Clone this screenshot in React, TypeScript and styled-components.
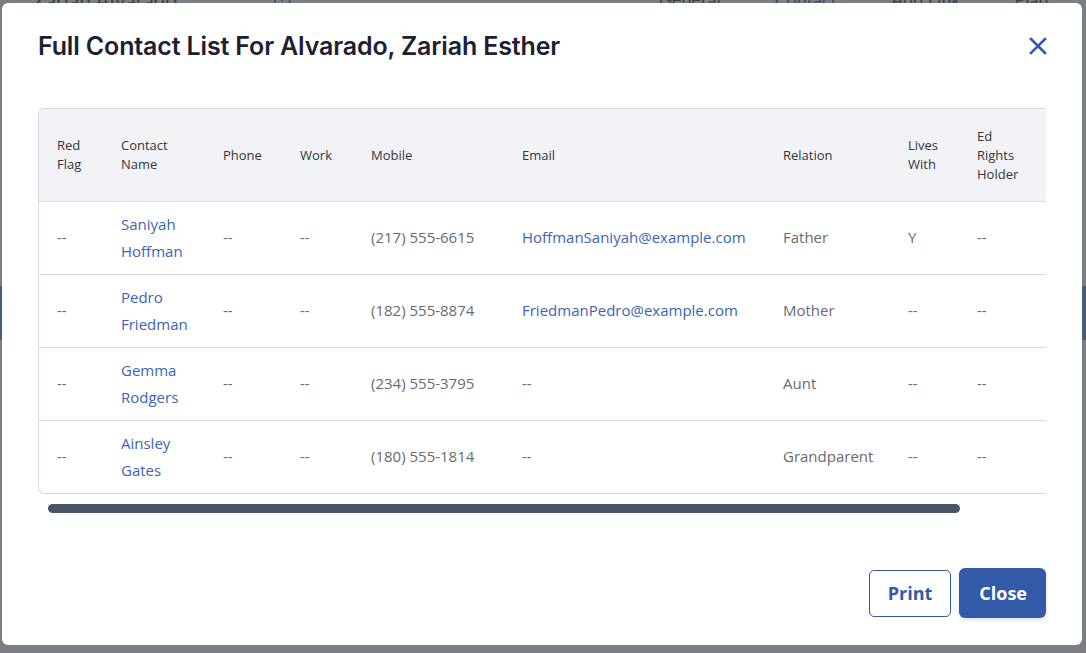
import React from 'react';
import styled, { createGlobalStyle } from 'styled-components';

const GlobalStyle = createGlobalStyle`
  html, body {
    margin: 0;
    padding: 0;
    width: 100%;
    height: 100%;
    overflow: hidden;
    background: #7b7f83;
  }
  * { box-sizing: border-box; }
`;

type Contact = {
  first: string;
  last: string;
  phone: string;
  work: string;
  mobile: string;
  email?: string;
  relation: string;
  livesWith: string;
  edRights: string;
};

const contacts: Contact[] = [
  { first: 'Saniyah', last: 'Hoffman', phone: '--', work: '--', mobile: '(217) 555-6615', email: 'HoffmanSaniyah@example.com', relation: 'Father', livesWith: 'Y', edRights: '--' },
  { first: 'Pedro', last: 'Friedman', phone: '--', work: '--', mobile: '(182) 555-8874', email: 'FriedmanPedro@example.com', relation: 'Mother', livesWith: '--', edRights: '--' },
  { first: 'Gemma', last: 'Rodgers', phone: '--', work: '--', mobile: '(234) 555-3795', relation: 'Aunt', livesWith: '--', edRights: '--' },
  { first: 'Ainsley', last: 'Gates', phone: '--', work: '--', mobile: '(180) 555-1814', relation: 'Grandparent', livesWith: '--', edRights: '--' },
];

const columns = [
  { label: 'Red Flag', width: 64 },
  { label: 'Contact Name', width: 102 },
  { label: 'Phone', width: 77 },
  { label: 'Work', width: 71 },
  { label: 'Mobile', width: 151 },
  { label: 'Email', width: 261 },
  { label: 'Relation', width: 125 },
  { label: 'Lives With', width: 69 },
  { label: 'Ed Rights Holder', width: 172 },
];

export default function App() {
  return (
    <>
      <GlobalStyle />
      <Backdrop>
        <BackPage>
          <BackHeader>
            <BackName>Zariah Alvarado</BackName>
            <BackHelp>(?)</BackHelp>
            <BackTabs>
              <BackTab>General</BackTab>
              <BackTab $active>Contact</BackTab>
              <BackTab>Add Link</BackTab>
              <BackTab>Plan</BackTab>
            </BackTabs>
          </BackHeader>
          <BackBand />
        </BackPage>
      </Backdrop>
      <Overlay>
        <Modal role="dialog" aria-label="Full Contact List">
          <Header>
            <Title>Full Contact List For Alvarado, Zariah Esther</Title>
            <CloseIcon aria-label="Close">
              <svg width="18" height="18" viewBox="0 0 18 18">
                <path d="M2 2 L16 16 M16 2 L2 16" stroke="#3359a9" strokeWidth="2.6" strokeLinecap="square" />
              </svg>
            </CloseIcon>
          </Header>

          <TableFrame>
            <Table>
              <colgroup>
                {columns.map(c => (
                  <col key={c.label} style={{ width: c.width }} />
                ))}
              </colgroup>
              <thead>
                <tr>
                  {columns.map(c => (
                    <Th key={c.label}>
                      <HeadLabel>{c.label}</HeadLabel>
                    </Th>
                  ))}
                </tr>
              </thead>
              <tbody>
                {contacts.map(c => (
                  <Row key={c.first}>
                    <Td>--</Td>
                    <Td>
                      <Link>
                        {c.first}
                        <br />
                        {c.last}
                      </Link>
                    </Td>
                    <Td>{c.phone}</Td>
                    <Td>{c.work}</Td>
                    <Td>{c.mobile}</Td>
                    <Td>{c.email ? <Link>{c.email}</Link> : '--'}</Td>
                    <Td>{c.relation}</Td>
                    <Td>{c.livesWith}</Td>
                    <Td>{c.edRights}</Td>
                  </Row>
                ))}
              </tbody>
            </Table>
          </TableFrame>
          <ScrollTrack>
            <ScrollThumb style={{ width: '92.3%' }} />
          </ScrollTrack>

          <Footer>
            <OutlineButton>Print</OutlineButton>
            <SolidButton>Close</SolidButton>
          </Footer>
        </Modal>
      </Overlay>
    </>
  );
}

const Backdrop = styled.div`
  width: 1086px;
  height: 653px;
  overflow: hidden;
`;

const BackPage = styled.div`
  margin-top: -13px;
  display: flex;
  flex-direction: column;
`;

const BackHeader = styled.div`
  display: flex;
  align-items: center;
  padding: 0 0 0 33px;
  height: 24px;
  font-family: 'Lato', sans-serif;
  color: #3e4247;
  white-space: nowrap;
`;

const BackName = styled.div`
  font-size: 21px;
`;

const BackHelp = styled.div`
  font-size: 18px;
  margin-left: 96px;
  color: #3d4a66;
`;

const BackTabs = styled.div`
  display: flex;
  gap: 54px;
  font-size: 18px;
  margin-left: 368px;
`;

const BackTab = styled.span<{ $active?: boolean }>`
  color: ${p => (p.$active ? '#3d4a66' : '#3e4247')};
`;

const BackBand = styled.div`
  margin-top: 275px;
  height: 54px;
  background: #4b5c79;
`;

const Overlay = styled.div`
  position: fixed;
  inset: 0;
  padding: 3px 4px 8px 2px;
  display: flex;
`;

const Modal = styled.div`
  flex: 1;
  min-width: 0;
  background: #ffffff;
  border-radius: 6px;
  padding: 28px 36px 27px 36px;
  display: flex;
  flex-direction: column;
`;

const Header = styled.div`
  display: flex;
  align-items: center;
  justify-content: space-between;
  height: 30px;
`;

const Title = styled.h2`
  margin: 0;
  font-family: 'Inter', sans-serif;
  font-weight: 600;
  font-size: 25px;
  letter-spacing: -0.15px;
  color: #1d2033;
`;

const CloseIcon = styled.button`
  border: none;
  background: none;
  padding: 0;
  margin-right: -1px;
  width: 18px;
  height: 18px;
  display: flex;
  cursor: pointer;
`;

const TableFrame = styled.div`
  margin-top: 47px;
  min-width: 0;
  border: 1px solid #d5d9e1;
  border-right: none;
  border-radius: 6px 0 0 6px;
  overflow: hidden;
`;

const Table = styled.table`
  border-collapse: collapse;
  table-layout: fixed;
  width: 1092px;
`;

const Th = styled.th`
  background: #f1f3f7;
  height: 92px;
  padding: 1px 12px 0 18px;
  text-align: left;
  vertical-align: middle;
  font-family: 'Open Sans', sans-serif;
  font-weight: 500;
  font-size: 13px;
  line-height: 19px;
  color: #33363d;
  border-bottom: 1px solid #d9dde4;
`;

const HeadLabel = styled.span`
  display: block;
  max-width: 48px;
`;

const Row = styled.tr`
  & + & td {
    border-top: 1px solid #d5d9e1;
  }
`;

const Td = styled.td`
  height: 73px;
  padding: 0 12px 0 18px;
  vertical-align: middle;
  font-family: 'Open Sans', sans-serif;
  font-size: 15px;
  line-height: 27px;
  color: #6a6b6e;
  white-space: nowrap;
`;

const Link = styled.span`
  color: #3c64b4;
  cursor: pointer;
`;

const ScrollTrack = styled.div`
  margin: 10px 10px 0 10px;
  height: 9px;
`;

const ScrollThumb = styled.div`
  height: 100%;
  background: #4a5568;
  border-radius: 5px;
`;

const Footer = styled.div`
  margin-top: auto;
  display: flex;
  justify-content: flex-end;
  align-items: center;
  gap: 8px;
`;

const OutlineButton = styled.button`
  height: 47px;
  padding: 0 18px;
  border: 1px solid #3359a9;
  border-radius: 5px;
  background: #ffffff;
  color: #3359a9;
  font-family: 'Open Sans', sans-serif;
  font-weight: 700;
  font-size: 18px;
  cursor: pointer;
`;

const SolidButton = styled.button`
  height: 50px;
  padding: 0 19px 0 20px;
  border: none;
  border-radius: 6px;
  background: #3359a9;
  color: #ffffff;
  font-family: 'Open Sans', sans-serif;
  font-weight: 700;
  font-size: 18px;
  box-shadow: 0 2px 4px rgba(0, 0, 0, 0.12);
  cursor: pointer;
`;
